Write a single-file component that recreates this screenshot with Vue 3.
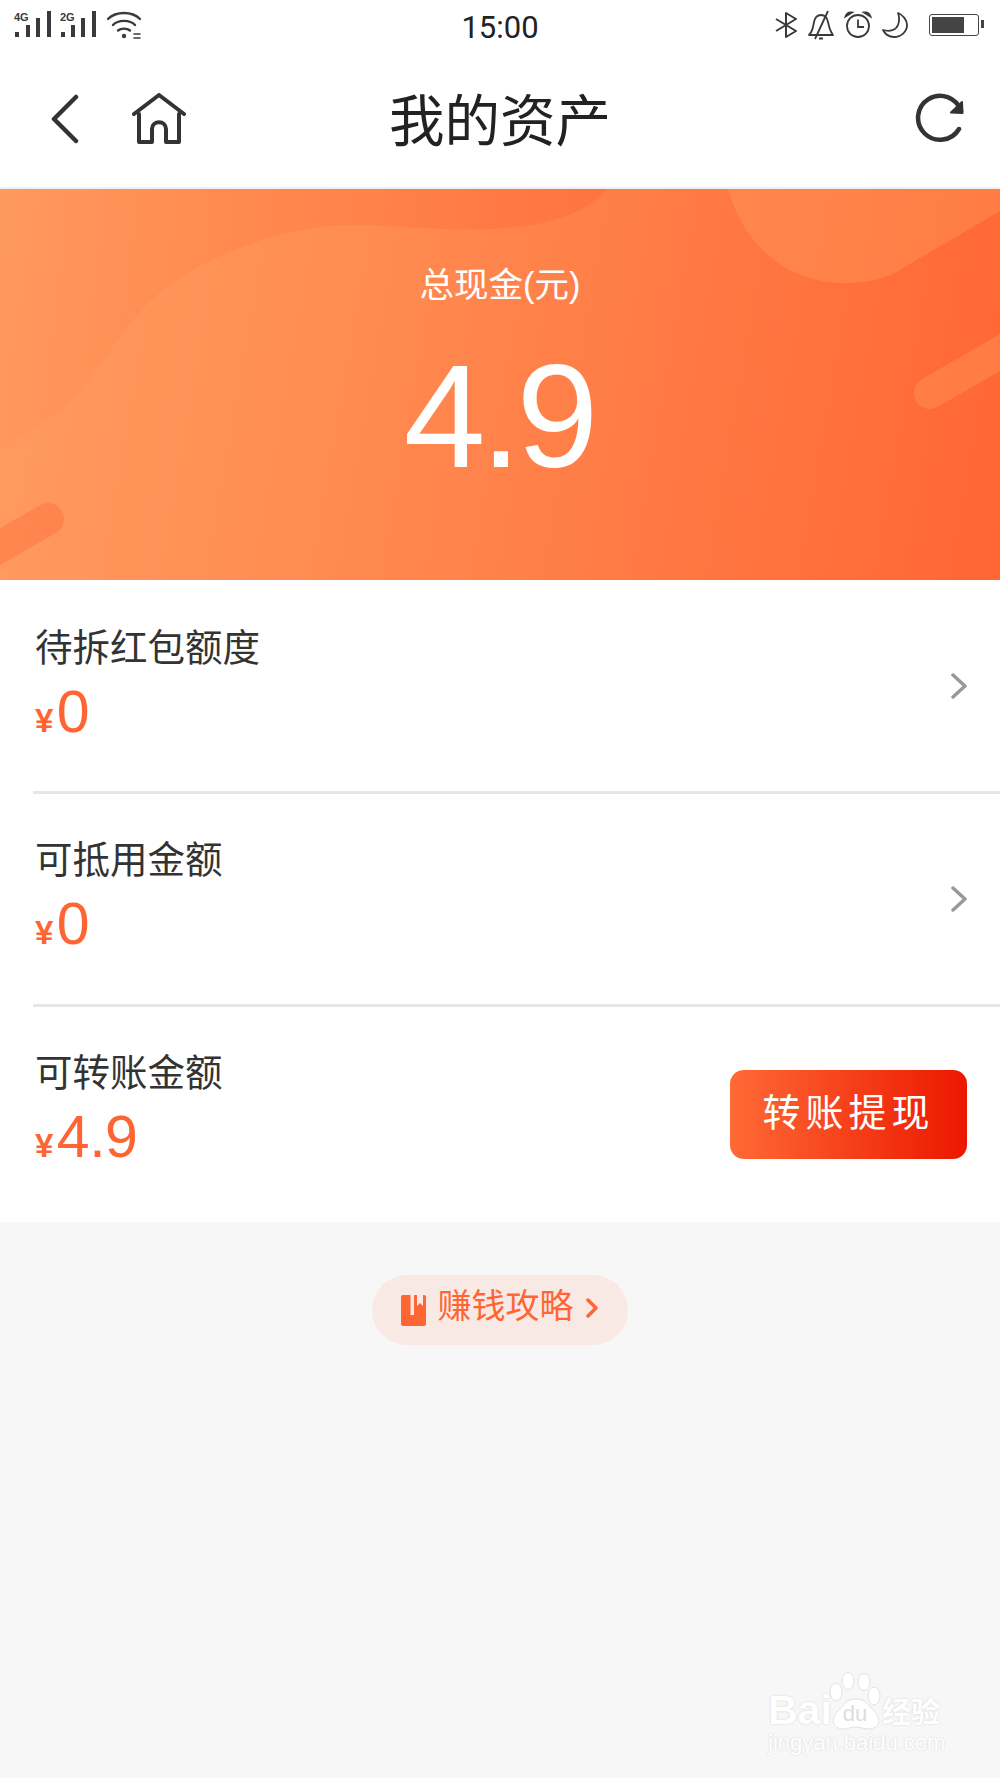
<template>
  <div class="page">
    <div class="status-bar">
      <div class="status-left">
        <svg class="signal" width="40" height="30" viewBox="0 0 40 30">
          <text x="0" y="11" class="net">4G</text>
          <rect x="1" y="22" width="4" height="5" /><rect x="12" y="15" width="4" height="12" />
          <rect x="22" y="8" width="4" height="19" /><rect x="33" y="1" width="4" height="26" />
        </svg>
        <svg class="signal" width="40" height="30" viewBox="0 0 40 30">
          <text x="0" y="11" class="net">2G</text>
          <rect x="1" y="22" width="4" height="5" /><rect x="11" y="15" width="4" height="12" />
          <rect x="21" y="8" width="4" height="19" /><rect x="32" y="1" width="4" height="26" />
        </svg>
        <svg width="36" height="30" viewBox="0 0 36 30" fill="none" stroke="#3a3a3a" stroke-width="2.4" stroke-linecap="round">
          <path d="M2 9C10 1 26 1 34 9" /><path d="M7 15C12 9.500 24 9.500 29 15" /><path d="M12 20.500C15 18 21 18 24 20.500" />
          <circle cx="18" cy="26" r="2.200" fill="#3a3a3a" stroke="none" />
          <path d="M28 24h6M28 28h6" stroke-width="1.600" />
        </svg>
      </div>
      <div class="time">15:00</div>
      <div class="status-right">
        <svg width="24" height="28" viewBox="0 0 24 28" fill="none" stroke="#3a3a3a" stroke-width="2">
          <path d="M2 8L22 20L12 26V2L22 8L2 20" stroke-linejoin="round" />
        </svg>
        <svg width="28" height="30" viewBox="0 0 28 30" fill="none" stroke="#3a3a3a" stroke-width="1.800">
          <path d="M2 25C6 21 6 17 7 12C8 7 11 5 14 5C17 5 20 7 21 12C22 17 23 21 26 25Z" stroke-linejoin="round" />
          <path d="M8 29L21 1" /><path d="M12 28.500h4" stroke-width="2" />
        </svg>
        <svg width="28" height="30" viewBox="0 0 28 30" fill="none" stroke="#3a3a3a" stroke-width="1.800">
          <circle cx="14" cy="16" r="11" /><path d="M14 9.500V17H20" />
          <path d="M1.500 6.500C2.500 3.500 5 2 8 2.500ZM26.500 6.500C25.500 3.500 23 2 20 2.500Z" fill="#3a3a3a" />
        </svg>
        <svg width="28" height="28" viewBox="0 0 28 28" fill="none" stroke="#3a3a3a" stroke-width="1.800">
          <path d="M17 2C22 4 26 9 26 14C26 21 20 26 13 26C8 26 4 23 2 19C9 21 15 19 17 14C18.500 10 18.500 6 17 2Z" stroke-linejoin="round" />
        </svg>
        <div class="battery"><div class="battery-fill"></div></div>
      </div>
    </div>

    <div class="nav">
      <div class="nav-left">
        <svg width="30" height="50" viewBox="0 0 30 50" fill="none" stroke="#333" stroke-width="4.500" stroke-linecap="round" stroke-linejoin="round">
          <path d="M26 3L4 25L26 47" />
        </svg>
        <svg width="54" height="52" viewBox="0 0 54 52" fill="none" stroke="#333" stroke-width="4" stroke-linecap="round" stroke-linejoin="round">
          <path d="M2 21L27 2L52 21" />
          <path d="M7 21V49H20V36C20 27 34 27 34 36V49H47V21" />
        </svg>
      </div>
      <div class="nav-title">我的资产</div>
      <div class="nav-right">
        <svg width="52" height="52" viewBox="0 0 52 52" fill="none" stroke="#333" stroke-width="4.500" stroke-linecap="round">
          <path d="M44 36A22 22 0 1 1 46 18" />
          <path d="M47 9L47.500 20L36 19.500Z" fill="#333" stroke-width="2" stroke-linejoin="round" />
        </svg>
      </div>
    </div>

    <div class="hero">
      <svg class="hero-bg" width="1000" height="391" viewBox="0 0 1000 391">
        <defs>
          <linearGradient id="topShade" x1="0" y1="0" x2="1" y2="0">
            <stop offset="0" stop-color="#ff7a45" stop-opacity="0.08" />
            <stop offset="1" stop-color="#ff6a3a" stop-opacity="0.55" />
          </linearGradient>
        </defs>
        <path d="M0 259C50 235 80 205 105 170C130 130 160 95 210 72C260 48 310 34 367 36C470 42 560 50 608 0H0Z" fill="url(#topShade)" />
        <path d="M728 0C745 60 790 94 845 94C875 94 890 88 915 72L1000 22V0Z" fill="#ffa867" fill-opacity="0.3" />
        <path d="M930 204L1030 146" stroke="#ffa867" stroke-opacity="0.3" stroke-width="32" stroke-linecap="round" />
        <path d="M48 330L-30 375" stroke="#ff6a3a" stroke-opacity="0.4" stroke-width="32" stroke-linecap="round" />
      </svg>
      <div class="hero-label">总现金(元)</div>
      <div class="hero-value">4.9</div>
    </div>

    <div class="list">
      <div v-for="item in items" :key="item.label" class="row">
        <div class="row-text">
          <div class="row-label">{{ item.label }}</div>
          <div class="row-value"><span class="yen">¥</span>{{ item.value }}</div>
        </div>
        <svg v-if="item.arrow" class="row-arrow" width="18" height="26" viewBox="0 0 18 26" fill="none" stroke="#999" stroke-width="3.500" stroke-linecap="round" stroke-linejoin="round">
          <path d="M3 2L15 13L3 24" />
        </svg>
        <button v-else class="cash-btn"><span>转账提现</span></button>
      </div>
    </div>

    <div class="guide">
      <div class="guide-pill">
        <svg width="25" height="31" viewBox="0 0 25 31">
          <rect width="25" height="31" rx="2" fill="#ff6533" />
          <path d="M9.500 0H13V20H9.500Z" fill="#f9e9e5" />
          <path d="M16 0H22V11L19 8L16 11Z" fill="#f9e9e5" />
        </svg>
        <span class="guide-text">赚钱攻略</span>
        <svg class="guide-arrow" width="14" height="22" viewBox="0 0 14 22" fill="none" stroke="#ff6533" stroke-width="3.500" stroke-linecap="round" stroke-linejoin="round">
          <path d="M2 3L10 11L2 19" />
        </svg>
      </div>
    </div>

    <div class="watermark">
      <div class="wm-top">
        <span class="wm-bai">Bai</span>
        <div class="wm-paw">
          <svg width="54" height="58" viewBox="0 0 54 58" fill="#fff" stroke="#e2e2e2" stroke-width="1">
            <ellipse cx="8" cy="20" rx="6" ry="9" /><ellipse cx="20" cy="9" rx="6" ry="8.500" />
            <ellipse cx="36" cy="10" rx="6" ry="8.500" /><ellipse cx="46" cy="24" rx="6" ry="9" />
            <path d="M28 27C38 27 41 34 47 40C54 47 51 57 41 57C35 57 33 55 28 55C23 55 20 57 15 57C5 57 2 47 9 40C15 34 18 27 28 27Z" />
          </svg>
          <span class="wm-du">du</span>
        </div>
        <span class="wm-cn">经验</span>
      </div>
      <div class="wm-url">jingyan.baidu.com</div>
    </div>
  </div>
</template>

<script setup>
const items = [
  { label: '待拆红包额度', value: '0', arrow: true },
  { label: '可抵用金额', value: '0', arrow: true },
  { label: '可转账金额', value: '4.9', arrow: false }
];
</script>

<style>
html, body { margin: 0; padding: 0; }
</style>

<style scoped>
.page {
  position: relative;
  width: 1000px;
  height: 1778px;
  overflow: hidden;
  background: #f7f7f7;
  font-family: "Noto Sans CJK SC", "Liberation Sans", sans-serif;
}

.status-bar {
  height: 50px;
  background: #fff;
  display: grid;
  grid-template-columns: 1fr auto 1fr;
  align-items: center;
  padding: 0 14px;
  box-sizing: border-box;
}
.status-left {
  display: flex;
  align-items: center;
  gap: 6px;
}
.signal rect { fill: #3a3a3a; }
.net {
  font-family: "Liberation Sans", sans-serif;
  font-weight: 700;
  font-size: 11px;
  fill: #3a3a3a;
}
.time {
  font-family: "Roboto", "Liberation Sans", sans-serif;
  font-size: 31px;
  color: #222;
  margin-top: 4px;
}
.status-right {
  display: flex;
  align-items: center;
  justify-content: flex-end;
  gap: 9px;
  margin-top: -1px;
}
.battery {
  position: relative;
  width: 50px;
  height: 22px;
  margin-left: 11px;
  margin-right: 7px;
  border: 1.500px solid #444;
  border-radius: 3px;
  padding: 2px;
  box-sizing: border-box;
}
.battery::after {
  content: "";
  position: absolute;
  right: -6px;
  top: 5px;
  width: 3px;
  height: 8px;
  background: #444;
}
.battery-fill {
  width: 72%;
  height: 100%;
  background: #444;
}

.nav {
  height: 139px;
  background: #fff;
  border-bottom: 2px solid #f0f0f0;
  box-sizing: border-box;
  display: grid;
  grid-template-columns: 1fr auto 1fr;
  align-items: center;
  padding: 0 33px;
}
.nav-left {
  display: flex;
  align-items: center;
  gap: 52px;
  margin-left: 17px;
}
.nav-title {
  font-size: 55.500px;
  color: #222;
  margin-top: -4px;
}
.nav-right {
  display: flex;
  justify-content: flex-end;
}

.hero {
  position: relative;
  height: 391px;
  background: linear-gradient(100deg, #ff9c60 0%, #ff8c52 35%, #ff7a45 65%, #ff6633 100%);
  color: #fff;
  text-align: center;
  overflow: hidden;
}
.hero-bg {
  position: absolute;
  left: 0;
  top: 0;
}
.hero-label {
  position: relative;
  padding-top: 74px;
  font-family: "Liberation Sans", "Noto Sans CJK SC", sans-serif;
  font-size: 34.500px;
  line-height: 44px;
}
.hero-value {
  position: relative;
  margin-top: 24px;
  padding-right: 3px;
  font-family: "Liberation Sans", sans-serif;
  font-size: 147px;
  line-height: 170px;
  letter-spacing: -5px;
}

.list {
  background: #fff;
}
.row {
  height: 214px;
  margin-left: 33px;
  padding-right: 32px;
  border-bottom: 3px solid #e6e6e6;
  box-sizing: border-box;
  display: flex;
  align-items: center;
  justify-content: space-between;
}
.row:nth-child(2) {
  height: 213px;
}
.row:last-child {
  height: 215px;
  padding-right: 33px;
  border-bottom: none;
}
.row-text {
  align-self: flex-start;
  padding: 39px 0 0 2px;
}
.row:first-child .row-text {
  padding-top: 41px;
}
.row-label {
  font-size: 37.500px;
  line-height: 48px;
  color: #333;
}
.row-value {
  margin-top: 8px;
  font-family: "Liberation Sans", sans-serif;
  font-size: 59px;
  line-height: 70px;
  letter-spacing: -0.5px;
  color: #ff6533;
}
.yen {
  font-size: 33px;
  font-weight: 700;
  margin-right: 4px;
}
.cash-btn {
  width: 237px;
  height: 89px;
  border: none;
  border-radius: 14px;
  background: linear-gradient(90deg, #ff6a35, #ec1700);
  color: #fff;
  font-family: inherit;
  font-size: 38px;
  letter-spacing: 5px;
  padding: 0 0 11px;
}

.guide {
  display: flex;
  justify-content: center;
  padding-top: 53px;
}
.guide-pill {
  width: 256px;
  height: 70px;
  border-radius: 35px;
  background: #f9e9e5;
  display: flex;
  align-items: center;
  justify-content: center;
  gap: 12px;
  color: #ff6533;
  font-size: 34px;
}
.guide-text {
  margin-top: -14px;
}
.guide-arrow {
  margin-top: -5px;
}

.watermark {
  position: absolute;
  left: 768px;
  top: 1672px;
  width: 182px;
  color: #fff;
  text-shadow: 0 0 2px #cfcfcf;
}
.wm-top {
  display: flex;
  align-items: flex-end;
  height: 58px;
}
.wm-bai {
  width: 60px;
  font-family: "Liberation Sans", sans-serif;
  font-weight: 700;
  font-size: 41px;
  line-height: 40px;
}
.wm-paw {
  position: relative;
  width: 54px;
  height: 58px;
}
.wm-du {
  position: absolute;
  left: 0;
  right: 0;
  bottom: 3px;
  text-align: center;
  font-family: "Liberation Sans", sans-serif;
  font-size: 22px;
  color: #ddd;
  text-shadow: none;
}
.wm-cn {
  font-size: 29px;
  line-height: 40px;
  font-weight: 700;
  white-space: nowrap;
}
.wm-url {
  margin-top: 1px;
  font-family: "Liberation Sans", sans-serif;
  font-size: 22px;
  line-height: 24px;
  white-space: nowrap;
}
</style>
